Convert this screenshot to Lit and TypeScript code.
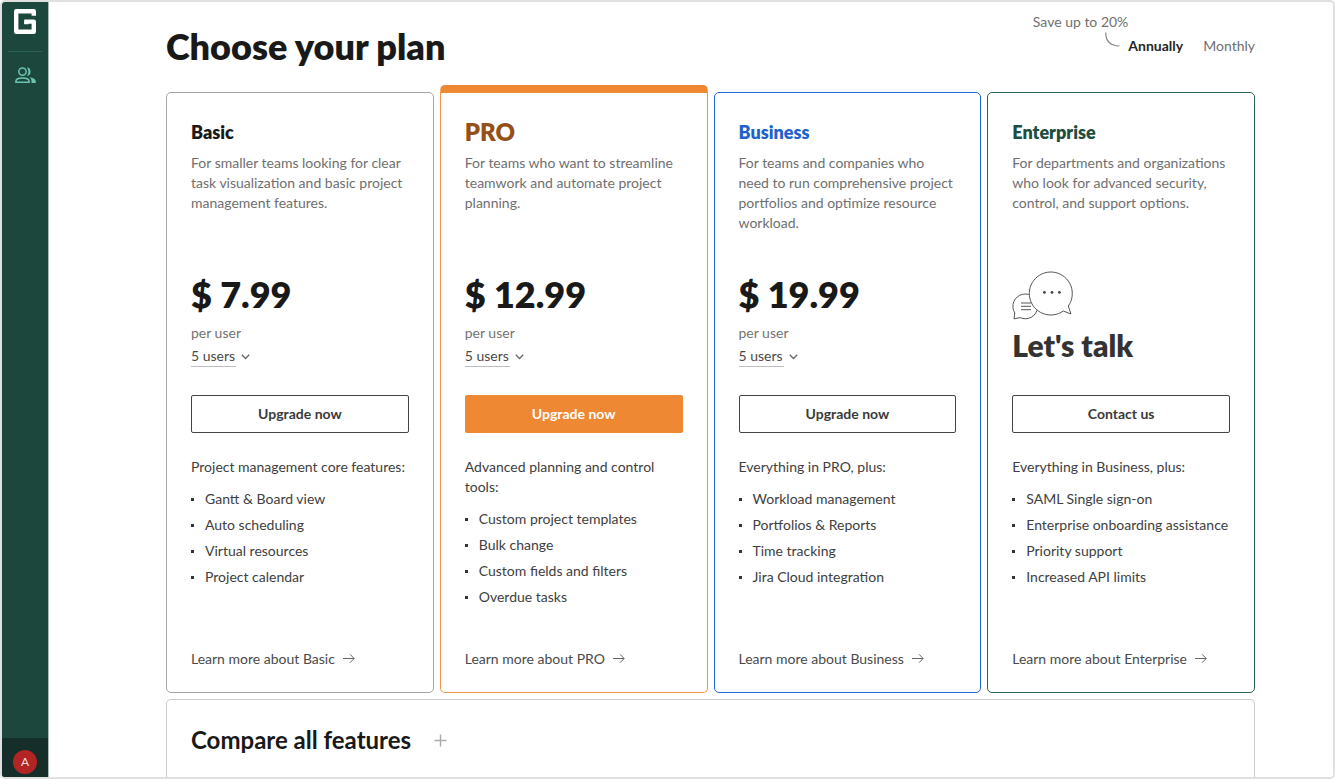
import { LitElement, html, css } from "lit";
import { customElement, property, state } from "lit/decorators.js";
import { classMap } from "lit/directives/class-map.js";

interface Plan {
  id: string;
  name: string;
  summary: string;
  price?: string;
  action: string;
  intro: string;
  features: string[];
}

const PLANS: Plan[] = [
  {
    id: "basic",
    name: "Basic",
    summary: "For smaller teams looking for clear task visualization and basic project management features.",
    price: "$ 7.99",
    action: "Upgrade now",
    intro: "Project management core features:",
    features: ["Gantt & Board view", "Auto scheduling", "Virtual resources", "Project calendar"],
  },
  {
    id: "pro",
    name: "PRO",
    summary: "For teams who want to streamline teamwork and automate project planning.",
    price: "$ 12.99",
    action: "Upgrade now",
    intro: "Advanced planning and control tools:",
    features: ["Custom project templates", "Bulk change", "Custom fields and filters", "Overdue tasks"],
  },
  {
    id: "business",
    name: "Business",
    summary: "For teams and companies who need to run comprehensive project portfolios and optimize resource workload.",
    price: "$ 19.99",
    action: "Upgrade now",
    intro: "Everything in PRO, plus:",
    features: ["Workload management", "Portfolios & Reports", "Time tracking", "Jira Cloud integration"],
  },
  {
    id: "enterprise",
    name: "Enterprise",
    summary: "For departments and organizations who look for advanced security, control, and support options.",
    action: "Contact us",
    intro: "Everything in Business, plus:",
    features: ["SAML Single sign-on", "Enterprise onboarding assistance", "Priority support", "Increased API limits"],
  },
];

const chatIcon = html`
  <svg width="62" height="49" viewBox="0 0 62 49" fill="none" stroke="#555" stroke-width="1" stroke-linejoin="round" aria-hidden="true">
    <path d="M2.8 42A12.4 12.4 0 1 1 8 46.6L2 47.9Z" />
    <path d="M9 32h10M9 35.3h10M9 38.7h10" />
    <path d="M56.3 35A21.5 21.5 0 1 0 51.3 40L59 43Z" fill="#fff" />
    <g fill="#444" stroke="none">
      <circle cx="32.4" cy="21.4" r="1.4" /><circle cx="40" cy="21.4" r="1.4" /><circle cx="47.4" cy="21.4" r="1.4" />
    </g>
  </svg>`;

@customElement("plan-card")
export class PlanCard extends LitElement {
  @property({ attribute: false }) plan!: Plan;

  static styles = css`
    :host { display: flex; min-width: 0; }
    .card {
      flex: 1;
      min-width: 0;
      box-sizing: border-box;
      display: flex;
      flex-direction: column;
      padding: 25px 24px 23px;
      border: 1px solid #a6a6a6;
      border-radius: 5px;
      background: #fff;
    }
    .pro { border-color: #f0963f; border-top: 8px solid #ee8833; margin-top: -7px; }
    .business { border-color: #1f66d6; }
    .enterprise { border-color: #2b6353; }
    .name { margin: 0 0 7px; font-size: 18px; line-height: 28px; font-weight: 800; color: #191919; }
    .pro .name { font-size: 24px; color: #95501a; }
    .business .name { color: #1f62cc; }
    .enterprise .name { color: #1d4d40; }
    .summary { margin: 0; min-height: 80px; color: #6f6f6f; }
    .offer {
      display: flex;
      flex-direction: column;
      align-items: flex-start;
      justify-content: flex-end;
      min-height: 134px;
      margin-bottom: 28px;
    }
    .price { font-size: 36px; line-height: 48px; font-weight: 800; color: #191919; }
    .unit { color: #737373; margin: 5px 0 3px; }
    .users { display: flex; align-items: center; gap: 5px; }
    select {
      appearance: none;
      margin: 0;
      padding: 0;
      border: 0;
      border-bottom: 1px solid #bdbdbd;
      border-radius: 0;
      background: none;
      font: inherit;
      height: 21px;
      color: #4a4a4a;
    }
    .chevron { display: block; }
    .talk { font-size: 30px; line-height: 40px; font-weight: 800; color: #333; margin: 5px 0 2px; }
    .action {
      height: 38px;
      border: 1px solid #444;
      border-radius: 2px;
      background: #fff;
      font: inherit;
      font-weight: 700;
      color: #3a3a3a;
      cursor: pointer;
    }
    .pro .action { background: #ee8833; border-color: #ee8833; color: #fff; }
    .intro { margin: 24px 0 12px; color: #404040; }
    ul { margin: 0; padding: 0; list-style: none; display: grid; gap: 6px; color: #404040; }
    li { display: flex; align-items: center; gap: 11px; }
    li::before { content: ""; flex: none; width: 3px; height: 3px; background: #333; }
    .more-row { margin-top: auto; padding-top: 42px; }
    .more { display: inline-flex; align-items: center; gap: 8px; color: #4a4a4a; text-decoration: none; }
  `;

  private renderOffer() {
    const p = this.plan;
    if (!p.price) return html`${chatIcon}<div class="talk">Let's talk</div>`;
    return html`
      <div class="price">${p.price}</div>
      <label class="unit" for="users">per user</label>
      <div class="users">
        <select id="users"><option>5 users</option></select>
        <svg class="chevron" width="9" height="6" viewBox="0 0 9 6" fill="none" stroke="#666" stroke-width="1.3" aria-hidden="true">
          <path d="M0.8 0.8L4.5 4.5L8.2 0.8" />
        </svg>
      </div>`;
  }

  render() {
    const p = this.plan;
    return html`
      <article class=${classMap({ card: true, [p.id]: true })}>
        <h2 class="name">${p.name}</h2>
        <p class="summary">${p.summary}</p>
        <div class="offer">${this.renderOffer()}</div>
        <button class="action" type="button">${p.action}</button>
        <p class="intro">${p.intro}</p>
        <ul>${p.features.map((f) => html`<li>${f}</li>`)}</ul>
        <div class="more-row">
          <a class="more" href="#${p.id}">Learn more about ${p.name}
            <svg width="12" height="10" viewBox="0 0 12 10" fill="none" stroke="#666" stroke-width="1" aria-hidden="true">
              <path d="M0 4.5h11M7 0.300L11.200 4.500L7 8.700" />
            </svg>
          </a>
        </div>
      </article>`;
  }
}

@customElement("app-root")
export class AppRoot extends LitElement {
  @state() private billing: "Annually" | "Monthly" = "Annually";

  static styles = css`
    :host {
      display: block;
      font-family: Lato, "Liberation Sans", sans-serif;
      font-size: 14px;
      line-height: 20px;
      color: #333;
      background: #fff;
    }
    .frame {
      box-sizing: border-box;
      min-height: 100vh;
      display: flex;
      border: 2px solid #e0e0e0;
      border-radius: 5px;
      overflow: hidden;
    }
    .rail {
      flex: none;
      width: 46px;
      display: flex;
      flex-direction: column;
      align-items: center;
      background: #1c473d;
      border-right: 1px solid #a9b8b4;
    }
    .logo { display: block; margin-top: 7px; }
    .rule { width: 34px; height: 1px; margin: 17px 0 15px; border: 0; background: #2a6256; }
    .team { display: block; line-height: 0; }
    .account {
      margin-top: auto;
      align-self: stretch;
      height: 39px;
      display: flex;
      justify-content: center;
      align-items: flex-end;
      background: #152e29;
    }
    .avatar {
      width: 24px;
      height: 24px;
      margin: 0 0 3px;
      padding: 0;
      border: 0;
      border-radius: 50%;
      background: #b22524;
      color: #f6dada;
      font: inherit;
      font-size: 12px;
    }
    main { flex: 1; min-width: 0; display: flex; flex-direction: column; padding: 0 78px 0 117px; }
    header { display: flex; justify-content: space-between; min-height: 90px; }
    h1 { margin: 0; padding: 22px 0 24px; font-size: 36px; line-height: 44px; font-weight: 800; color: #191919; }
    .billing { display: grid; grid-template-columns: auto auto; grid-template-rows: 20px 28px; padding-top: 10px; color: #6f6f6f; }
    .swoosh { grid-area: 2 / 1; justify-self: end; margin-right: 8px; }
    .periods { grid-area: 2 / 2; display: flex; align-items: center; gap: 20px; }
    .period { padding: 0; border: 0; background: none; font: inherit; color: #6f6f6f; cursor: pointer; }
    .period.on { font-weight: 700; color: #262626; }
    .plans { display: grid; grid-template-columns: repeat(4, minmax(0, 1fr)); gap: 6px; }
    .compare {
      flex: 1;
      margin-top: 6px;
      padding: 20px 24px 16px;
      border: 1px solid #ccc;
      border-bottom: 0;
      border-radius: 5px 5px 0 0;
    }
    .compare h2 { margin: 0; font-size: 24px; line-height: 40px; font-weight: 700; color: #191919; }
    .toggle { display: flex; align-items: center; gap: 23px; padding: 0; border: 0; background: none; font: inherit; color: inherit; cursor: pointer; }
  `;

  private renderPeriod(p: "Annually" | "Monthly") {
    const on = this.billing === p;
    return html`<button type="button" class=${classMap({ period: true, on })} aria-pressed=${on} @click=${() => (this.billing = p)}>${p}</button>`;
  }

  render() {
    return html`
      <div class="frame">
        <nav class="rail" aria-label="Main">
          <svg class="logo" width="22" height="25" viewBox="0 0 22 25" fill="none" stroke="#fff" stroke-width="4.4" stroke-linejoin="round" aria-hidden="true">
            <path d="M19.800 6.800V2.200H2.200V22.800H19.800V12.600H10.200" />
            <path d="M12.400 12.600V15.200" />
          </svg>
          <hr class="rule" />
          <a class="team" href="#team" aria-label="Team">
            <svg width="21" height="17" viewBox="0 0 21 17" fill="none" stroke="#6cc3b1" stroke-width="1.5">
              <circle cx="7.500" cy="4.600" r="3.700" />
              <path d="M0.900 15.200v-0.800c0-2.200 3.300-3.400 6.600-3.400s6.600 1.200 6.600 3.400v0.800Z" />
              <path d="M11.800 0.300a4.400 4.400 0 0 1 0 8.700a6.500 6.500 0 0 0 0-8.700ZM14.500 10.300c3.400.4 6.300 1.800 6.300 4.300v1.300h-4.300v-1.600c0-1.600-.8-3-2-4Z" fill="#6cc3b1" stroke="none" />
            </svg>
          </a>
          <div class="account"><button class="avatar" type="button">A</button></div>
        </nav>
        <main>
          <header>
            <h1>Choose your plan</h1>
            <div class="billing">
              <span>Save up to 20%</span>
              <svg class="swoosh" width="15" height="15" viewBox="0 0 15 15" fill="none" stroke="#888" stroke-width="1.2" aria-hidden="true">
                <path d="M0.700 0.500C0.700 8.500 4 13.800 14.500 14" />
              </svg>
              <div class="periods">${this.renderPeriod("Annually")}${this.renderPeriod("Monthly")}</div>
            </div>
          </header>
          <section class="plans">${PLANS.map((p) => html`<plan-card .plan=${p}></plan-card>`)}</section>
          <section class="compare">
            <h2>
              <button class="toggle" type="button">
                Compare all features
                <svg width="13" height="13" viewBox="0 0 13 13" stroke="#aaa" stroke-width="1.4" aria-hidden="true"><path d="M6.500 0.500v12M0.500 6.500h12" /></svg>
              </button>
            </h2>
          </section>
        </main>
      </div>`;
  }
}
